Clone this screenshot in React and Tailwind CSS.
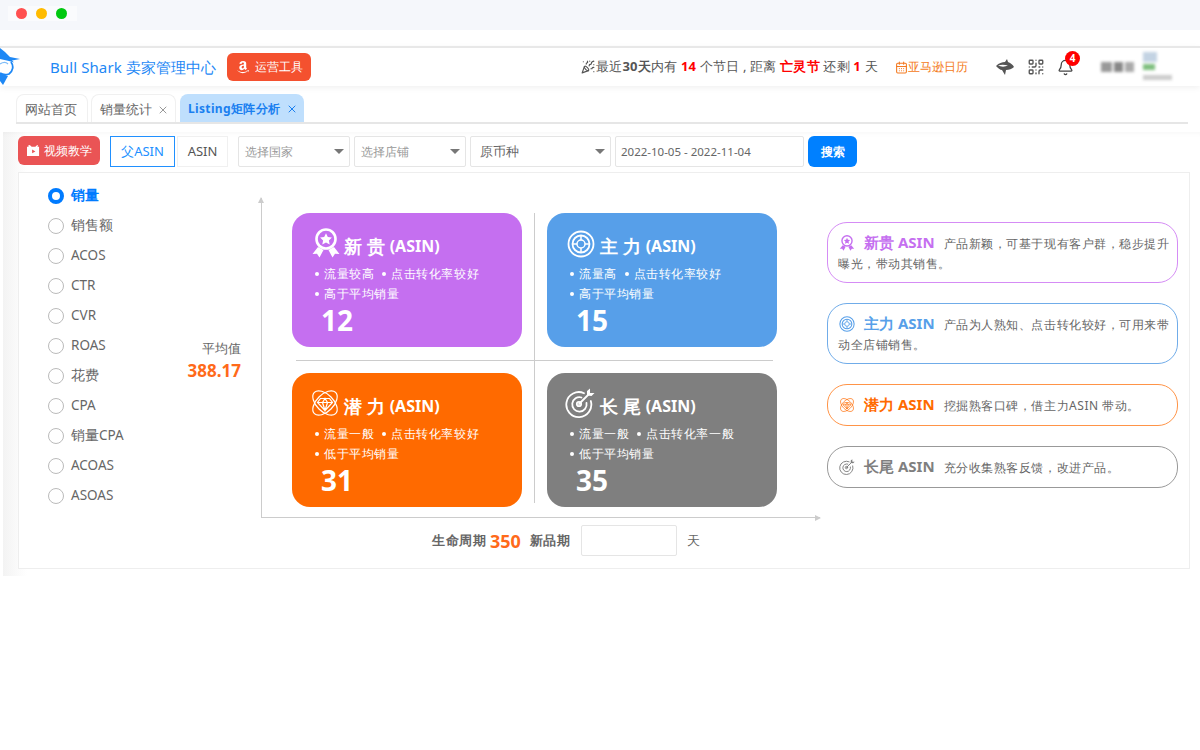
import React from 'react';
import { Bell, CalendarDays, PartyPopper, QrCode, X } from 'lucide-react';
import { FaAmazon } from 'react-icons/fa';

const MedalIcon = ({ className }) => (
  <svg viewBox="0 0 28 30" className={className} fill="none">
    <circle cx="14" cy="11" r="9.5" stroke="currentColor" strokeWidth="2.6" />
    <path d="M14 5.2l1.8 3.8 4.1.5-3 2.9.8 4.1-3.7-2-3.700 2 .8-4.100-3-2.900 4.100-.5z" fill="currentColor" />
    <path d="M6 19l-5.500 7 4.500-.2 2.500 3.700 4-7.500zM22 19l5.500 7-4.500-.2-2.500 3.700-4-7.500z" fill="currentColor" />
  </svg>
);

const RingIcon = ({ className }) => (
  <svg viewBox="0 0 28 28" className={className} fill="none" stroke="currentColor">
    <circle cx="14" cy="14" r="12.500" strokeWidth="1.800" />
    <circle cx="14" cy="14" r="8.500" strokeWidth="1.800" />
    <circle cx="14" cy="14" r="4" strokeWidth="1.500" />
    <path d="M14 5.500v4.500M14 18v4.500M5.500 14H10M18 14h4.500" strokeWidth="1.500" />
  </svg>
);

const GemIcon = ({ className }) => (
  <svg viewBox="0 0 30 30" className={className} fill="none" stroke="currentColor" strokeWidth="1.200">
    <ellipse cx="15" cy="15" rx="15" ry="8.500" transform="rotate(45 15 15)" />
    <ellipse cx="15" cy="15" rx="15" ry="8.500" transform="rotate(-45 15 15)" />
    <path d="M10.500 10.500h9l3 4-7.500 8-7.500-8zM7.500 14.500h15M12.500 14.500l2.500 8 2.500-8-2.500-4z" />
  </svg>
);

const DartIcon = ({ className }) => (
  <svg viewBox="0 0 30 30" className={className} fill="none" stroke="currentColor" strokeWidth="1.800" strokeLinecap="round">
    <path d="M19 5.200A12.500 12.500 0 1 0 25.800 13" />
    <path d="M16.500 9.500A7.200 7.200 0 1 0 21.500 15" />
    <circle cx="14" cy="16" r="2.200" />
    <path d="M14 16L24 6" />
    <path d="M22 7.500V3l3-2.500V5h4.500L26.500 8z" fill="currentColor" stroke="none" />
  </svg>
);

const SharkLogo = () => (
  <svg viewBox="0 0 22 38" className="h-[38px] w-[22px]">
    <path d="M0 0l5 4 5 5 10 2-8 1.500 2 2-5-1.500-9-2z" fill="#1e88f5" />
    <path d="M11 14c3 4 2 9-2 12-3 1-6 1-9-1" fill="none" stroke="#1e88f5" strokeWidth="1.800" />
    <path d="M0 16c3-2 6-2 8 0" fill="none" stroke="#7fbdf8" strokeWidth="1.200" />
    <path d="M0 25l8 3-5 9-3-4z" fill="#1e88f5" />
  </svg>
);

const SharkIcon = () => (
  <svg viewBox="0 0 18 16" className="h-4 w-[18px]" fill="#555">
    <path d="M0 7c3-3 6-4 9-4l2-3 1 3c3 1 5 3 6 5-2 2-5 3-8 3l-1 5-3-5C4 11 2 9 0 7z" />
    <path d="M2 6.500c3-1 6-1 10 0-3 1.500-7 1.500-10 0z" fill="#fff" />
  </svg>
);

const VideoIcon = () => (
  <svg viewBox="0 0 14 14" className="h-[13px] w-[13px]" fill="#fff">
    <path d="M3 1l2 2h4l2-2 1 1-1 1h2v10H0V3h2L1 2z" />
    <path d="M5.500 6v4l3.500-2z" fill="#ea5455" />
  </svg>
);

const radios = ['销量', '销售额', 'ACOS', 'CTR', 'CVR', 'ROAS', '花费', 'CPA', '销量CPA', 'ACOAS', 'ASOAS'];

const quads = [
  { name: '新 贵', bg: 'bg-[#c56ff0]', Icon: MedalIcon, iconSize: 'h-[30px] w-[28px]', a: '流量较高', b: '点击转化率较好', c: '高于平均销量', n: '12' },
  { name: '主 力', bg: 'bg-[#579fe9]', Icon: RingIcon, iconSize: 'h-[28px] w-[28px] mr-[1px]', a: '流量高', b: '点击转化率较好', c: '高于平均销量', n: '15' },
  { name: '潜 力', bg: 'bg-[#ff6a00]', Icon: GemIcon, iconSize: 'h-[30px] w-[30px] -ml-[2px]', a: '流量一般', b: '点击转化率较好', c: '低于平均销量', n: '31' },
  { name: '长 尾', bg: 'bg-[#7f7f7f]', Icon: DartIcon, iconSize: 'h-[30px] w-[30px] -ml-[2px] mr-[1px]', a: '流量一般', b: '点击转化率一般', c: '低于平均销量', n: '35' },
];

const notes = [
  { name: '新贵 ASIN', border: 'border-[#d58cf5]', text: 'text-[#c56ff0]', Icon: MedalIcon, h: 'h-[61px]', desc: '产品新颖，可基于现有客户群，稳步提升曝光，带动其销售。' },
  { name: '主力 ASIN', border: 'border-[#70ace9]', text: 'text-[#579fe9]', Icon: RingIcon, h: 'h-[61px]', desc: '产品为人熟知、点击转化较好，可用来带动全店铺销售。' },
  { name: '潜力 ASIN', border: 'border-[#ff9447]', text: 'text-[#ff6a00]', Icon: GemIcon, h: 'h-[42px]', desc: '挖掘熟客口碑，借主力ASIN 带动。' },
  { name: '长尾 ASIN', border: 'border-[#999999]', text: 'text-[#7f7f7f]', Icon: DartIcon, h: 'h-[42px]', desc: '充分收集熟客反馈，改进产品。' },
];

const Quad = ({ q }) => (
  <div className={`${q.bg} rounded-[18px] pl-[20px] pt-[13px] text-white`}>
    <div className="flex h-[32px] items-end">
      <q.Icon className={q.iconSize} />
      <span className="ml-[4px] text-[18px] leading-[24px] font-bold">{q.name}</span>
      <span className="ml-[5px] text-[16px] leading-[24px] font-bold">(ASIN)</span>
    </div>
    <div className="mt-[6px] flex h-[20px] items-center text-[12px] leading-[20px] tracking-[0.55px]">
      <i className="mr-[5px] ml-[3px] h-[4px] w-[4px] rounded-full bg-white" />
      <span>{q.a}</span>
      <i className="mr-[5px] ml-[8px] h-[4px] w-[4px] rounded-full bg-white" />
      <span>{q.b}</span>
    </div>
    <div className="flex h-[20px] items-center text-[12px] leading-[20px] tracking-[0.55px]">
      <i className="mr-[5px] ml-[3px] h-[4px] w-[4px] rounded-full bg-white" />
      <span>{q.c}</span>
    </div>
    <div className="-mt-[1px] ml-[9px] text-[28px] leading-[34px] font-bold">{q.n}</div>
  </div>
);

const Note = ({ n }) => (
  <div className={`${n.border} ${n.h} flex items-center rounded-[20px] border pr-[6px] pl-[10px]`}>
    <p className="text-[12px] leading-[20px] tracking-[0.55px] text-[#666]">
      <n.Icon className={`${n.text} mr-[9px] ml-[1px] inline-block h-[16px] w-[16px] align-[-3px]`} />
      <span className={`${n.text} mr-[9px] text-[15px] font-bold tracking-normal`}>{n.name}</span>
      {n.desc}
    </p>
  </div>
);

const Select = ({ w, label, dark }) => (
  <div className={`${w} ${dark ? 'pl-[9px] text-[13px] text-[#666]' : 'pl-[6px] text-[12px] text-[#999]'} flex h-[31px] items-center justify-between rounded-[2px] border border-[#e5e5e5] pr-[5px]`}>
    <span>{label}</span>
    <i className="h-0 w-0 border-x-[5px] border-t-[5px] border-x-transparent border-t-[#777]" />
  </div>
);

export default function App() {
  return (
    <div className="min-h-[750px] bg-white font-['Open_Sans','Noto_Sans_CJK_SC',sans-serif]">
      {/* window bar */}
      <div className="h-[30px] bg-[#f5f7fb] pt-[6px] pl-[8px]">
        <div className="flex h-[15px] w-[69px] items-center gap-[9px] bg-[#fafbfd] pl-[8px]">
          <i className="h-[11px] w-[11px] rounded-full bg-[#ff5050]" />
          <i className="h-[11px] w-[11px] rounded-full bg-[#ffbb00]" />
          <i className="h-[11px] w-[11px] rounded-full bg-[#00c810]" />
        </div>
      </div>
      <div className="h-[16px]" />

      {/* header */}
      <div className="flex h-[40px] items-center border-t-2 border-[#e8e8e8] shadow-[0_2px_6px_rgba(0,0,0,0.06)]">
        <SharkLogo />
        <span className="ml-[28px] w-[167px] text-[15px] tracking-[0.1px] whitespace-nowrap text-[#1e88f5]">Bull Shark 卖家管理中心</span>
        <div className="ml-[10px] flex h-[28px] w-[84px] items-center justify-center gap-[5px] rounded-[6px] bg-[#f4512f] text-[12px] text-white">
          <FaAmazon className="text-[14px]" />
          运营工具
        </div>
        <div className="ml-[270px] flex w-[298px] items-center text-[13px] tracking-[0.2px] whitespace-nowrap text-[#555]">
          <PartyPopper size={14} className="mr-[1px]" strokeWidth={2} />
          <span>最近<b>30天</b>内有 <b className="text-[#f00]">14</b> 个节日 , 距离 <b className="text-[#f00]">亡灵节</b> 还剩 <b className="text-[#f00]">1</b> 天</span>
        </div>
        <div className="ml-[16px] flex w-[73px] items-center text-[12px] text-[#f47a20]">
          <CalendarDays size={13} />
          亚马逊日历
        </div>
        <div className="ml-[28px]"><SharkIcon /></div>
        <QrCode size={18} strokeWidth={1.800} className="ml-[13px] text-[#555]" />
        <div className="relative ml-[12px]">
          <Bell size={17} strokeWidth={1.800} className="text-[#444]" />
          <span className="absolute -top-[8px] left-[8px] flex h-[15px] w-[15px] items-center justify-center rounded-full bg-[#f00] text-[10px] font-bold text-white">4</span>
        </div>
        <div className="ml-[27px] flex h-[10px] w-[33px] gap-[2px] blur-[1.500px]">
          <i className="w-[12px] bg-[#999]" />
          <i className="w-[9px] bg-[#888]" />
          <i className="w-[10px] bg-[#aaa]" />
        </div>
        <div className="relative ml-[9px] h-[30px] w-[29px] blur-[1.500px]">
          <div className="h-[10px] w-[14px] bg-[#c3d3e3]" />
          <div className="mt-[2px] h-[6px] w-[12px] bg-[#7fbf7f]" />
          <div className="mt-[5px] h-[5px] w-[29px] bg-[#ccc]" />
        </div>
      </div>

      {/* tabs */}
      <div className="mt-[8px] mr-[12px] ml-[16px] flex h-[30px] gap-[3px] border-b-2 border-[#e6e6e6] text-[13px] text-[#666]">
        <div className="flex h-[28px] w-[72px] items-center rounded-t-[8px] border border-b-0 border-[#f0f0f0] pt-[2px] pl-[8px]">网站首页</div>
        <div className="flex h-[28px] w-[85px] items-center gap-[5px] rounded-t-[8px] border border-b-0 border-[#f0f0f0] pt-[2px] pl-[8px]">
          销量统计
          <X size={12} className="text-[#999]" />
        </div>
        <div className="ml-[1px] flex h-[28px] w-[124px] items-center gap-[6px] rounded-t-[8px] bg-[#bfdffd] pt-[2px] pl-[8px] text-[12px] font-bold tracking-[0.35px] text-[#1a7ff0]">
          Listing矩阵分析
          <X size={12} />
        </div>
      </div>

      {/* page body */}
      <div className="mt-[8px] ml-[3px] bg-[linear-gradient(90deg,#f3f3f3,#ffffff_24px)] pb-[7px] pl-[15px] shadow-[inset_0_6px_6px_-6px_rgba(0,0,0,0.05)]">
        {/* toolbar */}
        <div className="flex h-[40px] items-start pt-[4px] text-[13px]">
          <div className="flex h-[29px] w-[82px] items-center justify-center gap-[4px] rounded-[6px] bg-[#ea5455] text-[12px] text-white">
            <VideoIcon />
            视频教学
          </div>
          <div className="ml-[10px] flex h-[31px] w-[65px] items-center justify-center border border-[#2090ff] text-[#2090ff]">父ASIN</div>
          <div className="ml-[2px] flex h-[31px] w-[51px] items-center justify-center border border-[#f0f0f0] text-[#555]">ASIN</div>
          <div className="ml-[10px]"><Select w="w-[112px]" label="选择国家" /></div>
          <div className="ml-[4px]"><Select w="w-[112px]" label="选择店铺" /></div>
          <div className="ml-[4px]"><Select w="w-[141px]" label="原币种" dark /></div>
          <div className="ml-[4px] flex h-[31px] w-[189px] items-center rounded-[2px] border border-[#e5e5e5] pl-[5px] text-[11.500px] text-[#666]">2022-10-05 - 2022-11-04</div>
          <div className="ml-[4px] flex h-[31px] w-[49px] items-center justify-center rounded-[6px] bg-[#0080ff] text-[12px] font-bold text-white">搜索</div>
        </div>

        {/* main box */}
        <div className="flex h-[397px] w-[1172px] flex-col border border-[#eeeeee] bg-white">
          <div className="flex h-[345px]">
            <div className="w-[130px] pt-[7px] pl-[29px]">
              {radios.map((r, i) => (
                <div key={r} className="flex h-[30px] items-center gap-[7px] pt-[1px] text-[13.500px]">
                  {i === 0
                    ? <i className="h-[16px] w-[16px] rounded-full border-[4.500px] border-[#007bff] bg-white" />
                    : <i className="h-[16px] w-[16px] rounded-full border border-[#bbb]" />}
                  <span className={i === 0 ? 'font-semibold text-[#007bff]' : 'text-[#666]'}>{r}</span>
                </div>
              ))}
            </div>
            <div className="flex w-[92px] flex-col items-end pt-[164px]">
              <span className="text-[13.300px] leading-[22px] text-[#666]">平均值</span>
              <span className="text-[17px] leading-[24px] font-bold text-[#ff6a1a]">388.17</span>
            </div>
            <div className="relative mt-[25px] ml-[20px] h-[320px] w-[559px] border-b border-l border-[#ccc] pt-[15px] pl-[30px]">
              <i className="absolute -top-[1px] -left-[4px] h-0 w-0 border-x-[3.500px] border-b-[6px] border-x-transparent border-b-[#ccc]" />
              <i className="absolute -right-[1px] -bottom-[4px] h-0 w-0 border-y-[3.500px] border-l-[6px] border-y-transparent border-l-[#ccc]" />
              <div className="relative grid w-[485px] grid-cols-[230px_230px] grid-rows-[134px_134px] gap-x-[25px] gap-y-[26px]">
                <i className="absolute top-0 left-[242px] h-[290px] w-px bg-[#ccc]" />
                <i className="absolute top-[147px] left-[4px] h-px w-[477px] bg-[#ccc]" />
                {quads.map((q) => <Quad key={q.n} q={q} />)}
              </div>
            </div>
            <div className="mt-[49px] ml-[7px] flex w-[351px] flex-col gap-[20px]">
              {notes.map((n) => <Note key={n.name} n={n} />)}
            </div>
          </div>
          <div className="mt-[7px] flex items-center pl-[413px] text-[13px] tracking-[0.5px] text-[#666]">
            <b className="font-semibold">生命周期</b>
            <span className="ml-[4px] text-[18px] leading-[24px] font-bold tracking-normal text-[#ff6a1a]">350</span>
            <b className="ml-[9px] font-semibold">新品期</b>
            <input className="ml-[11px] h-[31px] w-[96px] rounded-[2px] border border-[#e5e5e5]" />
            <span className="ml-[10px]">天</span>
          </div>
        </div>
      </div>
    </div>
  );
}
